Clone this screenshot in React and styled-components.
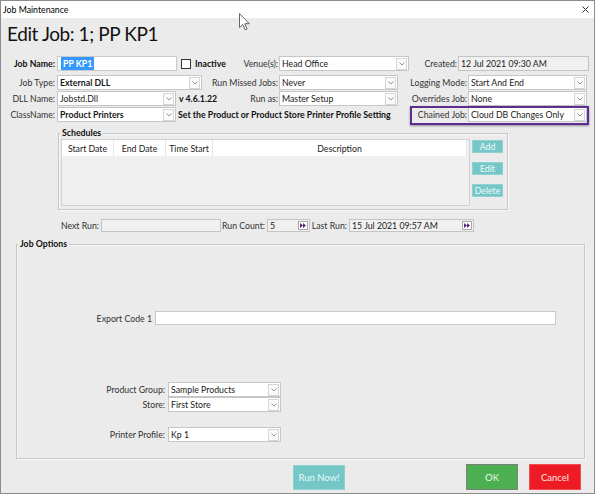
import React from "react";
import styled, { createGlobalStyle } from "styled-components";

const GlobalStyle = createGlobalStyle`
  * { box-sizing: border-box; }
  html, body { margin: 0; padding: 0; background: #ffffff; }
  body {
    font-family: Lato, "Open Sans", sans-serif;
    font-size: 8.75px;
    color: #1a1a1a;
  }
`;

const Window = styled.div`
  position: relative;
  width: 595px;
  height: 494px;
  border: 1px solid #8c8c8c;
  background: #ebebeb;
  display: flex;
  flex-direction: column;
  overflow: hidden;
`;

const TitleBar = styled.div`
  height: 17px;
  flex: none;
  background: #ffffff;
  display: flex;
  align-items: center;
  justify-content: space-between;
  padding: 0 5px 0 2px;
  font-size: 8.75px;
  color: #000;
`;

const Cursor = styled.svg`
  position: absolute;
  left: 238px;
  top: 12px;
`;

const Heading = styled.h1`
  margin: 4px 0 0 6px;
  font-size: 19px;
  letter-spacing: -0.4px;
  line-height: 24px;
  font-weight: 400;
  color: #111;
`;

const FormGrid = styled.div`
  display: grid;
  grid-template-columns: 56px 164px 58px 120px 69px 121px;
  grid-template-rows: 15px 19px 16px 16px;
  align-items: end;
  margin-top: 10px;
`;

const Label = styled.div`
  height: 15px;
  display: flex;
  align-items: center;
  justify-content: flex-end;
  padding-right: ${p => p.$pad ?? 1}px;
  font-weight: ${p => (p.$bold ? 700 : 400)};
  color: ${p => (p.$bold ? "#111" : "#333")};
  white-space: nowrap;
  width: ${p => (p.$width ? `${p.$width}px` : "auto")};
  flex: ${p => (p.$grow ? 1 : "none")};
`;

const Cell = styled.div`
  height: 15px;
  display: flex;
  align-items: center;
  grid-column: span ${p => p.$span || 1};
  min-width: 0;
`;

const TextBox = styled.div`
  width: ${p => p.$width}px;
  height: ${p => p.$height || 15}px;
  flex: none;
  display: flex;
  align-items: center;
  padding-left: 2px;
  background: ${p => (p.$readonly ? "#f0f0f0" : "#ffffff")};
  border: 1px solid ${p => (p.$readonly ? "#c4c4c4" : "#c9c9c9")};
  white-space: nowrap;
  overflow: hidden;
  color: #222;
`;

const Selected = styled.span`
  background: #3399ff;
  color: #fff;
  font-weight: 700;
  padding: 1px 2px;
  margin-left: 1px;
`;

const SelectBox = styled.div`
  width: ${p => p.$width}px;
  height: 15px;
  flex: none;
  display: flex;
  align-items: center;
  padding-left: 2px;
  background: #ffffff;
  border: 1px solid #c6c6c6;
`;

const SelectText = styled.span`
  flex: 1;
  min-width: 0;
  overflow: hidden;
  white-space: nowrap;
  font-weight: ${p => (p.$bold ? 700 : 400)};
  color: #1a1a1a;
`;

const DropButton = styled.span`
  width: 11px;
  height: 12px;
  margin-right: 1px;
  flex: none;
  display: flex;
  align-items: center;
  justify-content: center;
  background: #fafafa;
  border: 1px solid #d6d6d6;
`;

const CheckBox = styled.span`
  width: 10px;
  height: 10px;
  margin-left: 4px;
  flex: none;
  background: #fff;
  border: 1px solid #333;
`;

const Note = styled.span`
  font-weight: 700;
  color: #111;
  white-space: nowrap;
  margin-left: ${p => p.$gap || 3}px;
`;

const Highlight = styled.div`
  grid-column: span 2;
  position: relative;
  display: grid;
  grid-template-columns: 69px 121px;
  height: 15px;

  &::after {
    content: "";
    position: absolute;
    left: 11px;
    right: 0;
    top: -1px;
    bottom: -3px;
    border: 2px solid #5e2d8e;
    box-shadow: 0 1px 2px rgba(40, 20, 60, 0.45);
    pointer-events: none;
  }
`;

const Group = styled.div`
  margin: ${p => p.$top}px 0 0 ${p => p.$left}px;
  width: ${p => p.$width}px;
  height: ${p => p.$height}px;
  flex: none;
  border: 1px solid #c6c6c6;
  box-shadow: inset 1px 1px 0 #f8f8f8, 1px 1px 0 #f8f8f8;
  display: flex;
  flex-direction: column;
`;

const Caption = styled.div`
  width: fit-content;
  height: 10px;
  line-height: 10px;
  margin: -6px 0 ${p => p.$after || 0}px 1px;
  padding: 0 2px;
  background: #ebebeb;
  font-weight: 700;
  color: #111;
`;

const ScheduleArea = styled.div`
  display: flex;
  align-items: flex-start;
  padding-left: 2px;
`;

const ListView = styled.div`
  width: 409px;
  height: 67px;
  background: #f0f0f0;
  border: 1px solid #d2d2d2;
`;

const ListHeader = styled.div`
  display: flex;
  height: 16px;
  background: #ffffff;
  margin-right: 2px;
`;

const HeaderCell = styled.div`
  width: ${p => p.$width}px;
  flex: ${p => (p.$grow ? 1 : "none")};
  display: flex;
  align-items: center;
  justify-content: center;
  border-right: 1px solid #e6e6e6;
  color: #222;
`;

const SideButtons = styled.div`
  display: flex;
  flex-direction: column;
  gap: 9px;
  margin: 1px 0 0 2px;
`;

const SmallButton = styled.div`
  width: 31px;
  height: 13px;
  display: flex;
  align-items: center;
  justify-content: center;
  background: #75c7c7;
  border: 1px solid #8fd2d2;
  color: #eefafa;
`;

const RunRow = styled.div`
  display: flex;
  align-items: center;
  height: 13px;
  margin-top: 9px;
`;

const SpinButton = styled.span`
  margin-left: auto;
  margin-right: 1px;
  width: 10px;
  height: 9px;
  flex: none;
  display: flex;
  align-items: center;
  justify-content: center;
  background: #fff;
  border: 1px solid #a8a8a8;
`;

const OptionsBody = styled.div`
  display: flex;
  flex-direction: column;
  padding-top: 62px;
`;

const OptionRow = styled.div`
  display: flex;
  align-items: center;
  height: ${p => p.$height || 15}px;
  margin-top: ${p => p.$top || 0}px;
`;

const Footer = styled.div`
  display: flex;
  align-items: center;
  height: 26px;
  margin-top: 5px;
  padding: 0 13px 0 292px;
`;

const palette = {
  teal: { bg: "#75c7c7", border: "#8dd1d1", fg: "#e8f7f7" },
  green: { bg: "#4caf50", border: "#7d7d7d", fg: "#eef7ee" },
  red: { bg: "#ed1c24", border: "#f24d53", fg: "#fde3e4" },
};

const ActionButton = styled.div`
  width: 52px;
  height: ${p => (p.$variant === "teal" ? 25 : 26)}px;
  display: flex;
  align-items: center;
  justify-content: center;
  font-size: 9.5px;
  background: ${p => palette[p.$variant].bg};
  border: 1px solid ${p => palette[p.$variant].border};
  color: ${p => palette[p.$variant].fg};
  margin-left: ${p => p.$gap || 0}px;
`;

const Spacer = styled.div`
  flex: 1;
`;

const Chevron = () => (
  <svg width="6" height="4" viewBox="0 0 6 4">
    <path d="M0.5 0.5 L3 3 L5.5 0.5" fill="none" stroke="#8a8a8a" strokeWidth="0.9" />
  </svg>
);

const Select = ({ value, bold, width }) => (
  <SelectBox $width={width}>
    <SelectText $bold={bold}>{value}</SelectText>
    <DropButton>
      <Chevron />
    </DropButton>
  </SelectBox>
);

const Spin = () => (
  <SpinButton>
    <svg width="6" height="5" viewBox="0 0 6 5">
      <path d="M0 0 L3 2.5 L0 5 Z M3 0 L6 2.5 L3 5 Z" fill="#5a2a7a" />
    </svg>
  </SpinButton>
);

const scheduleColumns = [
  { title: "Start Date", width: 52 },
  { title: "End Date", width: 52 },
  { title: "Time Start", width: 47 },
  { title: "Description", grow: true },
];

const App = () => {
  return (
    <>
      <GlobalStyle />
      <Window>
        <TitleBar>
          <span>Job Maintenance</span>
          <svg width="7" height="7" viewBox="0 0 7 7">
            <path d="M0.5 0.5 L6.5 6.5 M6.5 0.5 L0.5 6.5" stroke="#333" strokeWidth="1" />
          </svg>
        </TitleBar>

        <Heading>Edit Job: 1; PP KP1</Heading>

        <FormGrid>
          <Label $bold $pad={2}>Job Name:</Label>
          <Cell>
            <TextBox $width={120}>
              <Selected>PP KP1</Selected>
            </TextBox>
            <CheckBox />
            <Note $gap={4}>Inactive</Note>
          </Cell>
          <Label>Venue(s):</Label>
          <Cell $span={3}>
            <Select value="Head Office" width={130} />
            <Label $grow>Created:</Label>
            <TextBox $width={131} $readonly>12 Jul 2021 09:30 AM</TextBox>
          </Cell>

          <Label $pad={2}>Job Type:</Label>
          <Cell>
            <Select value="External DLL" bold width={145} />
          </Cell>
          <Label>Run Missed Jobs:</Label>
          <Cell>
            <Select value="Never" width={119} />
          </Cell>
          <Label>Logging Mode:</Label>
          <Cell>
            <Select value="Start And End" width={119} />
          </Cell>

          <Label $pad={2}>DLL Name:</Label>
          <Cell>
            <Select value="Jobstd.Dll" width={119} />
            <Note>v 4.6.1.22</Note>
          </Cell>
          <Label>Run as:</Label>
          <Cell>
            <Select value="Master Setup" width={119} />
          </Cell>
          <Label>Overrides Job:</Label>
          <Cell>
            <Select value="None" width={119} />
          </Cell>

          <Label $pad={2}>ClassName:</Label>
          <Cell $span={3}>
            <Select value="Product Printers" bold width={119} />
            <Note $gap={2}>Set the Product or Product Store Printer Profile Setting</Note>
          </Cell>
          <Highlight>
            <Label>Chained Job:</Label>
            <Cell>
              <Select value="Cloud DB Changes Only" width={119} />
            </Cell>
          </Highlight>
        </FormGrid>

        <Group $top={11} $left={57} $width={450} $height={77}>
          <Caption $after={1}>Schedules</Caption>
          <ScheduleArea>
            <ListView>
              <ListHeader>
                {scheduleColumns.map(col => (
                  <HeaderCell key={col.title} $width={col.width} $grow={col.grow}>
                    {col.title}
                  </HeaderCell>
                ))}
              </ListHeader>
            </ListView>
            <SideButtons>
              <SmallButton>Add</SmallButton>
              <SmallButton>Edit</SmallButton>
              <SmallButton>Delete</SmallButton>
            </SideButtons>
          </ScheduleArea>
        </Group>

        <RunRow>
          <Label $width={100} $pad={2}>Next Run:</Label>
          <TextBox $width={120} $height={13} $readonly />
          <Label $width={46} $pad={2}>Run Count:</Label>
          <TextBox $width={43} $height={13} $readonly>
            5
            <Spin />
          </TextBox>
          <Label $width={39} $pad={2}>Last Run:</Label>
          <TextBox $width={125} $height={13} $readonly>
            15 Jul 2021 09:57 AM
            <Spin />
          </TextBox>
        </RunRow>

        <Group $top={12} $left={15} $width={569} $height={215}>
          <Caption>Job Options</Caption>
          <OptionsBody>
            <OptionRow $height={14}>
              <Label $width={138} $pad={3}>Export Code 1</Label>
              <TextBox $width={401} $height={14} />
            </OptionRow>
            <OptionRow $top={57}>
              <Label $width={151} $pad={3}>Product Group:</Label>
              <Select value="Sample Products" width={113} />
            </OptionRow>
            <OptionRow>
              <Label $width={151} $pad={3}>Store:</Label>
              <Select value="First Store" width={113} />
            </OptionRow>
            <OptionRow $top={15}>
              <Label $width={151} $pad={3}>Printer Profile:</Label>
              <Select value="Kp 1" width={113} />
            </OptionRow>
          </OptionsBody>
        </Group>

        <Footer>
          <ActionButton $variant="teal">Run Now!</ActionButton>
          <Spacer />
          <ActionButton $variant="green">OK</ActionButton>
          <ActionButton $variant="red" $gap={11}>Cancel</ActionButton>
        </Footer>

        <Cursor width="12" height="18" viewBox="0 0 12 18">
          <path
            d="M0.5 0.5 L0.5 14.5 L3.8 11.4 L6.2 16.8 L8.1 16 L5.8 10.7 L10.3 10.7 Z"
            fill="#ffffff"
            stroke="#555"
            strokeWidth="0.9"
          />
        </Cursor>
      </Window>
    </>
  );
};

export default App;
